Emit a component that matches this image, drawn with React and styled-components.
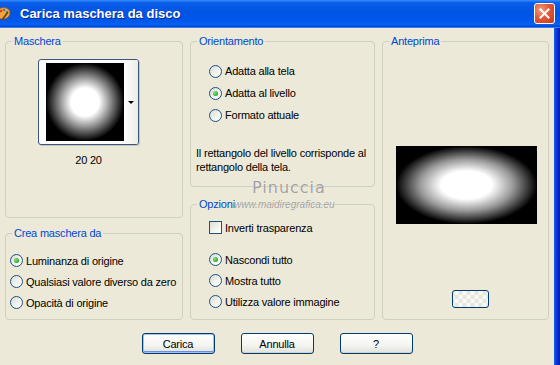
import React from 'react';
import styled, { createGlobalStyle } from 'styled-components';

const GlobalStyle = createGlobalStyle`
  html, body {
    margin: 0;
    padding: 0;
    width: 560px;
    height: 365px;
    overflow: hidden;
    background: #ece9d8;
  }
`;

const Window = styled.div`
  display: flex;
  flex-direction: column;
  width: 560px;
  height: 365px;
  font-family: "Liberation Sans", Arial, sans-serif;
  font-size: 11px;
  letter-spacing: -0.2px;
  color: #000;
`;

const TitleBar = styled.div`
  display: flex;
  align-items: center;
  height: 28px;
  flex-shrink: 0;
  padding-right: 5px;
  background: linear-gradient(#3a8cff 0%, #0a5ee8 10%, #0054e3 45%, #0058ee 80%, #0a62f0 90%, #0043cf 100%);
  border-bottom: 1px solid #3c7ef0;
  box-sizing: border-box;
`;

const AppIcon = styled.svg`
  width: 16px;
  height: 16px;
  margin-left: -4px;
  flex-shrink: 0;
`;

const Title = styled.div`
  flex: 1;
  margin-left: 8px;
  color: #fff;
  font-weight: bold;
  font-size: 13px;
  letter-spacing: 0;
  text-shadow: 1px 1px 0 #0a2b8a;
`;

const CloseButton = styled.div`
  display: flex;
  align-items: center;
  justify-content: center;
  width: 21px;
  height: 21px;
  box-sizing: border-box;
  border: 1px solid #fff;
  border-radius: 3px;
  background: radial-gradient(circle at 30% 30%, #f39c7e 0%, #e2593a 45%, #c33a16 100%);
`;

const Main = styled.div`
  display: flex;
  flex: 1;
`;

const Body = styled.div`
  flex: 1;
  display: flex;
  flex-direction: column;
  background: #ece9d8;
`;

const Frame = styled.div`
  width: 6px;
  background: linear-gradient(to right, #1660e8, #0831d9 50%, #001ea0);
`;

const Columns = styled.div`
  display: grid;
  grid-template-columns: 178px 185px 167px;
  column-gap: 7px;
  padding: 13px 0 0 5px;
  height: 278px;
`;

const Column = styled.div`
  display: flex;
  flex-direction: column;
  justify-content: space-between;
  height: 100%;
`;

const Group = styled.div`
  position: relative;
  height: ${({ $h }) => $h}px;
  box-sizing: border-box;
  border: 1px solid #d0d0bf;
  border-radius: 4px;
  padding: ${({ $pad }) => $pad || '0'};
`;

const Legend = styled.div`
  position: absolute;
  top: -7px;
  left: 6px;
  padding: 0 2px;
  line-height: 13px;
  background: #ece9d8;
  color: #0046d5;
`;

const Thumb = styled.div`
  display: flex;
  align-items: stretch;
  width: 101px;
  height: 86px;
  margin-left: 32px;
  box-sizing: border-box;
  border: 1px solid #3a5580;
  border-radius: 3px;
  background: #fff;
  box-shadow: 1px 1px 0 #c8c6b8;
  overflow: hidden;
`;

const ThumbImage = styled.div`
  width: 78px;
  height: 78px;
  margin: 3px 0 0 7px;
  background: radial-gradient(circle closest-side, #fff 0%, #fff 36%, #9a9a9a 62%, #000 100%);
`;

const DropArea = styled.div`
  flex: 1;
  display: flex;
  align-items: center;
  justify-content: flex-end;
  padding-right: 4px;
  background: linear-gradient(to right, #fff, #ecebe4);
`;

const Arrow = styled.span`
  width: 0;
  height: 0;
  border-left: 3px solid transparent;
  border-right: 3px solid transparent;
  border-top: 3px solid #000;
`;

const Size = styled.div`
  width: 101px;
  margin: 9px 0 0 32px;
  text-align: center;
  line-height: 13px;
`;

const OptionList = styled.div`
  padding-left: ${({ $indent }) => $indent || 0}px;
  margin-top: ${({ $top }) => $top || 0}px;
`;

const Option = styled.div`
  display: flex;
  align-items: center;
  height: ${({ $h }) => $h || 21}px;
  gap: 3px;
`;

const Radio = styled.span`
  position: relative;
  width: 13px;
  height: 13px;
  box-sizing: border-box;
  border: 1px solid #1c5180;
  border-radius: 50%;
  background: linear-gradient(135deg, #dcdcd5 0%, #f4f4f0 60%, #fff 100%);
  flex-shrink: 0;

  &::after {
    content: '';
    display: ${({ $checked }) => ($checked ? 'block' : 'none')};
    position: absolute;
    left: 3px;
    top: 3px;
    width: 5px;
    height: 5px;
    border-radius: 50%;
    background: radial-gradient(circle at 35% 35%, #7ee67a, #21a121 80%);
  }
`;

const Check = styled.span`
  width: 13px;
  height: 13px;
  box-sizing: border-box;
  border: 1px solid #1c5180;
  background: linear-gradient(135deg, #dcdcd5 0%, #f4f4f0 60%, #fff 100%);
  flex-shrink: 0;
`;

const Note = styled.p`
  margin: 20px 0 0;
  line-height: 14px;
`;

const Preview = styled.div`
  display: flex;
  flex-direction: column;
  align-items: center;
  padding: 104px 0 0 2px;
`;

const PreviewImage = styled.div`
  width: 141px;
  height: 78px;
  background: radial-gradient(ellipse closest-side, #fff 0%, #fff 36%, #999 66%, #000 100%);
`;

const TinyButton = styled.div`
  margin: 66px 0 0 7px;
  width: 37px;
  height: 18px;
  box-sizing: border-box;
  border: 1px solid #003c74;
  border-radius: 3px;
  background:
    repeating-conic-gradient(#e6e6e0 0 25%, #f8f8f6 0 50%) 50% 50% / 8px 8px;
`;

const ButtonRow = styled.div`
  display: flex;
  justify-content: center;
  gap: 26px;
  margin-top: 14px;
`;

const Button = styled.div`
  display: flex;
  align-items: center;
  justify-content: center;
  width: 73px;
  height: 21px;
  box-sizing: border-box;
  border: 1px solid #003c74;
  border-radius: 3px;
  background: linear-gradient(#ffffff 0%, #f4f4f0 60%, #e2e1da 100%);
  box-shadow: ${({ $default }) =>
    $default ? 'inset 0 0 0 1px #a5c3f2, inset 0 -1px 0 1px #6b8fe0' : 'inset 0 -1px 0 #d6d0c5'};
`;

const Stage = styled.div`
  position: relative;
`;

const Watermark = styled.div`
  position: absolute;
  left: 0;
  top: 0;
  pointer-events: none;
  color: rgba(130, 130, 130, 0.75);
  text-shadow: 0 0 1px #fff;
`;

const WatermarkName = styled.div`
  position: absolute;
  left: 62px;
  top: 137px;
  font-family: "DejaVu Sans", sans-serif;
  font-size: 16px;
  letter-spacing: 1px;
  white-space: nowrap;
`;

const WatermarkUrl = styled.div`
  position: absolute;
  left: 44px;
  top: 158px;
  font-family: "Liberation Sans", sans-serif;
  font-style: italic;
  font-size: 10px;
  letter-spacing: 0;
  white-space: nowrap;
`;

function RadioOption({ checked, children, h }) {
  return (
    <Option $h={h}>
      <Radio $checked={checked} />
      <span>{children}</span>
    </Option>
  );
}

export default function App() {
  return (
    <>
      <GlobalStyle />
      <Window>
        <TitleBar>
          <AppIcon viewBox="0 0 16 16">
            <path d="M2 5 C2 2 7 1 10 2 C14 3 15 7 13 10 C11 13 6 14 3 12 C1 10 2 8 2 5 Z" fill="#f3a43c" stroke="#a25a10" strokeWidth="0.8" />
            <circle cx="5" cy="5" r="1.3" fill="#e23b2b" />
            <circle cx="8" cy="4" r="1.2" fill="#3a7be0" />
            <circle cx="11" cy="6" r="1.2" fill="#3cb043" />
            <path d="M6 14 L12 6" stroke="#6b3a12" strokeWidth="1.6" />
          </AppIcon>
          <Title>Carica maschera da disco</Title>
          <CloseButton>
            <svg width="13" height="13" viewBox="0 0 13 13">
              <path d="M2.5 2.5 L10.5 10.5 M10.5 2.5 L2.5 10.5" stroke="#fff" strokeWidth="2" strokeLinecap="square" />
            </svg>
          </CloseButton>
        </TitleBar>
        <Main>
          <Body>
            <Columns>
              <Column>
                <Group $h={177} $pad="17px 0 0 0">
                  <Legend>Maschera</Legend>
                  <Thumb>
                    <ThumbImage />
                    <DropArea>
                      <Arrow />
                    </DropArea>
                  </Thumb>
                  <Size>20 20</Size>
                </Group>
                <Group $h={87} $pad="16px 0 0 4px">
                  <Legend>Crea maschera da</Legend>
                  <RadioOption checked>Luminanza di origine</RadioOption>
                  <RadioOption>Qualsiasi valore diverso da zero</RadioOption>
                  <RadioOption>Opacità di origine</RadioOption>
                </Group>
              </Column>
              <Stage>
                <Column>
                  <Group $h={146} $pad="18px 0 0 5px">
                    <Legend>Orientamento</Legend>
                    <OptionList $indent={13}>
                      <RadioOption h={22}>Adatta alla tela</RadioOption>
                      <RadioOption h={22} checked>Adatta al livello</RadioOption>
                      <RadioOption h={22}>Formato attuale</RadioOption>
                    </OptionList>
                    <Note>
                      Il rettangolo del livello corrisponde al
                      <br />
                      rettangolo della tela.
                    </Note>
                  </Group>
                  <Group $h={116} $pad="12px 0 0 18px">
                    <Legend>Opzioni</Legend>
                    <Option>
                      <Check />
                      <span>Inverti trasparenza</span>
                    </Option>
                    <OptionList $top={11}>
                      <RadioOption checked>Nascondi tutto</RadioOption>
                      <RadioOption>Mostra tutto</RadioOption>
                      <RadioOption>Utilizza valore immagine</RadioOption>
                    </OptionList>
                  </Group>
                </Column>
                <Watermark>
                  <WatermarkName>Pinuccia</WatermarkName>
                  <WatermarkUrl>www.maidiregrafica.eu</WatermarkUrl>
                </Watermark>
              </Stage>
              <Column>
                <Group $h={279}>
                  <Legend>Anteprima</Legend>
                  <Preview>
                    <PreviewImage />
                    <TinyButton />
                  </Preview>
                </Group>
              </Column>
            </Columns>
            <ButtonRow>
              <Button $default>Carica</Button>
              <Button>Annulla</Button>
              <Button>?</Button>
            </ButtonRow>
          </Body>
          <Frame />
        </Main>
      </Window>
    </>
  );
}
